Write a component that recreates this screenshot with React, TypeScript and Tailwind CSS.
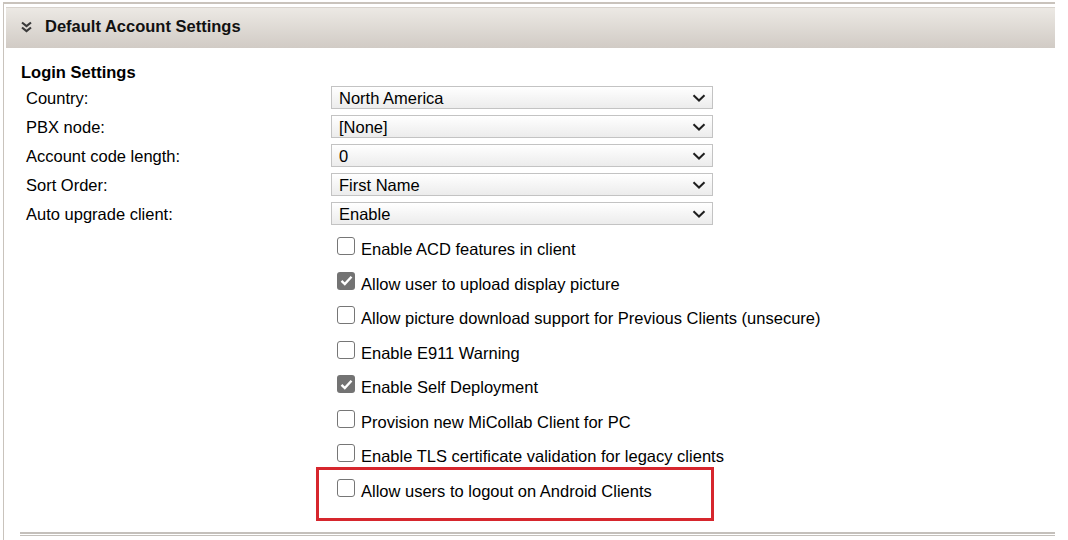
const selects = [
  { label: "Country:", value: "North America" },
  { label: "PBX node:", value: "[None]" },
  { label: "Account code length:", value: "0" },
  { label: "Sort Order:", value: "First Name" },
  { label: "Auto upgrade client:", value: "Enable" },
];

const options = [
  { label: "Enable ACD features in client", checked: false },
  { label: "Allow user to upload display picture", checked: true },
  { label: "Allow picture download support for Previous Clients (unsecure)", checked: false },
  { label: "Enable E911 Warning", checked: false },
  { label: "Enable Self Deployment", checked: true },
  { label: "Provision new MiCollab Client for PC", checked: false },
  { label: "Enable TLS certificate validation for legacy clients", checked: false },
  { label: "Allow users to logout on Android Clients", checked: false },
];

function Chevron() {
  return (
    <svg width="14" height="8" viewBox="0 0 14 8" className="shrink-0">
      <path d="M1.5 1.2 L7 6.5 L12.5 1.2" fill="none" stroke="#1f1f1f" strokeWidth="2" />
    </svg>
  );
}

function Checkbox({ checked }: { checked: boolean }) {
  if (checked) {
    return (
      <div className="w-[18px] h-[18px] rounded-[3px] bg-[#737373] flex items-center justify-center shrink-0">
        <svg width="13" height="11" viewBox="0 0 13 11">
          <path d="M1.5 5.8 L4.8 9 L11.5 1.8" fill="none" stroke="#fff" strokeWidth="2.4" />
        </svg>
      </div>
    );
  }
  return <div className="w-[18px] h-[18px] rounded-[3px] border border-[#767676] bg-white shrink-0" />;
}

export default function App() {
  return (
    <div className="w-[1068px] h-[540px] bg-white overflow-hidden relative text-black font-['Liberation_Sans',Arial,sans-serif]">
      <div className="ml-[3px] mt-[2px] w-[1052px] h-[538px] border-l border-t-2 border-[#c9c3bc]">
        <div className="ml-[2px] mt-[3px] h-[41px] border-t border-[#d8d3cd] bg-gradient-to-b from-[#ece9e4] to-[#d1cbc5] flex items-center pl-[14px] pb-[3px]">
          <svg width="13" height="12" viewBox="0 0 13 12" className="mr-[12px]">
            <path d="M2 1.5 L6.5 5 L11 1.5 M2 6.5 L6.5 10 L11 6.5" fill="none" stroke="#3a3a3a" strokeWidth="2.2" />
          </svg>
          <span className="text-[16.5px] font-bold text-[#111]">Default Account Settings</span>
        </div>

        <div className="pl-[17px] pt-[14px]">
          <div className="text-[16.5px] font-bold leading-[20px] h-[21px]">Login Settings</div>
          <div className="pl-[5px]">
            {selects.map((s) => (
              <div key={s.label} className="h-[29px] flex items-center">
                <div className="w-[305px] text-[16.5px] leading-[20px]">{s.label}</div>
                <div className="w-[382px] h-[23px] border border-[#c3c3c3] bg-gradient-to-b from-white to-[#ececec] flex items-center justify-between pl-[7px] pr-[6px]">
                  <span className="text-[16.5px] leading-[20px]">{s.value}</span>
                  <Chevron />
                </div>
              </div>
            ))}
          </div>
          <div className="pl-[316px] pt-[4px]">
            {options.map((o) => (
              <div key={o.label} className="h-[34.5px] flex items-center gap-[6px]">
                <div className="-mt-[6px]">
                  <Checkbox checked={o.checked} />
                </div>
                <span className="text-[16.5px] leading-[20px]">{o.label}</span>
              </div>
            ))}
          </div>
        </div>
        <div className="ml-[16px] mt-[24px] h-[4px] border-t-2 border-b border-[#c4c0bb]" />
      </div>
      <div className="absolute left-[316px] top-[467px] w-[398px] h-[54px] border-[3px] border-[#d6262d]" />
    </div>
  );
}
